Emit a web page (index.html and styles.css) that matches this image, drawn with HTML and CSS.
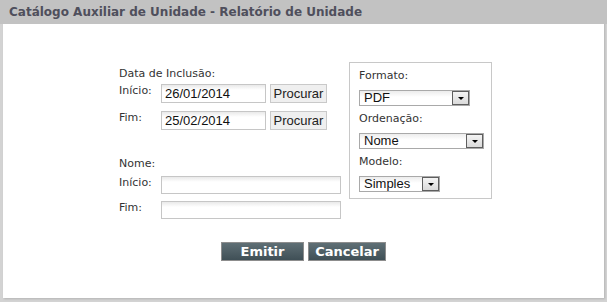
FILE: index.html
```html
<!DOCTYPE html>
<html lang="pt">
<head>
  <meta charset="UTF-8">
  <title>Relatório de Unidade</title>
  <link rel="stylesheet" href="styles.css">
</head>
<body>
  <div class="panel">
    <div class="panel-title">Catálogo Auxiliar de Unidade - Relatório de Unidade</div>

    <div class="panel-body">
      <div class="filters">
        <!-- filtros à esquerda -->
        <div class="filter-column">
          <div class="group-title">Data de Inclusão:</div>
          <div class="field-row">
            <label for="dtInicio">Início:</label>
            <input type="text" id="dtInicio" class="date-input" value="26/01/2014">
            <button class="lookup-button">Procurar</button>
          </div>
          <div class="field-row row-gap">
            <label for="dtFim">Fim:</label>
            <input type="text" id="dtFim" class="date-input" value="25/02/2014">
            <button class="lookup-button">Procurar</button>
          </div>

          <div class="group-title group-name">Nome:</div>
          <div class="field-row">
            <label for="nomeInicio">Início:</label>
            <input type="text" id="nomeInicio" class="name-input">
          </div>
          <div class="field-row row-gap-small">
            <label for="nomeFim">Fim:</label>
            <input type="text" id="nomeFim" class="name-input">
          </div>
        </div>

        <!-- opções do relatório -->
        <div class="options-box">
          <label class="option-label" for="formato">Formato:</label>
          <div class="select-wrap select-format">
            <select id="formato"><option>PDF</option><option>XLS</option></select>
          </div>
          <label class="option-label" for="ordenacao">Ordenação:</label>
          <div class="select-wrap select-order">
            <select id="ordenacao"><option>Nome</option><option>Código</option></select>
          </div>
          <label class="option-label" for="modelo">Modelo:</label>
          <div class="select-wrap select-model">
            <select id="modelo"><option>Simples</option><option>Completo</option></select>
          </div>
        </div>
      </div>

      <div class="actions">
        <button class="action-button btn-emit">Emitir</button>
        <button class="action-button btn-cancel">Cancelar</button>
      </div>
    </div>
  </div>
</body>
</html>
```

FILE: styles.css
```css
html, body {
  margin: 0;
  padding: 0;
  height: 100%;
}

body {
  background-color: #d3d3d3;
  font-family: "DejaVu Sans", Verdana, sans-serif;
  font-size: 11px;
  color: #333;
}

.panel {
  margin: 0 3px 0 3px;
  height: 298px;
  background-color: #fff;
  box-shadow: 1px 1px 2px rgba(0, 0, 0, 0.15);
}

.panel-title {
  margin: 0 -3px;
  height: 24px;
  padding-left: 9px;
  background-color: #c2c2c2;
  color: #4f4f5c;
  font-size: 12px;
  font-weight: bold;
  line-height: 25px;
}

.panel-body {
  padding-top: 38px;
}

.filters {
  display: flex;
  align-items: flex-start;
  padding-left: 116px;
}

.filter-column {
  width: 230px;
  margin-top: 5px;
}

.group-title {
  line-height: 14px;
  height: 14px;
  margin-bottom: 3px;
}

.group-name {
  margin-top: 27px;
  margin-bottom: 5px;
}

.field-row {
  display: flex;
  align-items: flex-start;
}

.field-row label {
  width: 42px;
  line-height: 14px;
}

.row-gap {
  margin-top: 8px;
}

.row-gap-small {
  margin-top: 7px;
}

.date-input,
.name-input {
  box-sizing: border-box;
  margin: 0;
  padding: 0 3px;
  border: 1px solid #c6c6c6;
  background: linear-gradient(#e9e9e9, #fff 5px);
  font-family: "Liberation Sans", Arial, sans-serif;
  font-size: 13px;
  color: #111;
  outline: none;
}

.date-input {
  width: 105px;
  height: 19px;
}

.name-input {
  width: 180px;
  height: 18px;
}

.lookup-button {
  box-sizing: border-box;
  width: 57px;
  height: 19px;
  margin: 0 0 0 4px;
  padding: 0;
  border: 1px solid #c9c9c9;
  background-color: #efefef;
  font-family: "Liberation Sans", Arial, sans-serif;
  font-size: 13px;
  color: #222;
  cursor: pointer;
}

.options-box {
  box-sizing: border-box;
  width: 143px;
  height: 137px;
  padding: 6px 0 0 9px;
  border: 1px solid #c8c8c8;
}

.option-label {
  display: block;
  line-height: 14px;
}

.select-wrap {
  position: relative;
  box-sizing: border-box;
  height: 16px;
  margin: 7px 0 6px;
  border: 1px solid #a9a9a9;
  background: linear-gradient(#ececec, #fff 6px);
}

.select-wrap select {
  display: block;
  width: 100%;
  height: 14px;
  margin: 0;
  padding: 0 0 0 4px;
  border: none;
  background: transparent;
  -webkit-appearance: none;
  appearance: none;
  font-family: "Liberation Sans", Arial, sans-serif;
  font-size: 13px;
  line-height: 14px;
  color: #111;
  outline: none;
}

/* botão da seta */
.select-wrap::before {
  content: "";
  position: absolute;
  top: 0;
  right: 0;
  width: 15px;
  height: 12px;
  border: 1px solid #5e5e5e;
  background: linear-gradient(#f4f4f4, #dadada);
}

.select-wrap::after {
  content: "";
  position: absolute;
  top: 6px;
  right: 5px;
  border-left: 3.5px solid transparent;
  border-right: 3.5px solid transparent;
  border-top: 3.5px solid #000;
}

.select-format {
  width: 111px;
}

.select-order {
  width: 125px;
}

.select-model {
  width: 81px;
}

.actions {
  display: flex;
  justify-content: center;
  gap: 4px;
  margin-top: 23px;
}

.action-button {
  box-sizing: border-box;
  height: 19px;
  margin: 0;
  padding: 0;
  border: 1px solid #8d8d8d;
  background: linear-gradient(#5f6f75, #3f4f56);
  color: #fff;
  font-family: "DejaVu Sans", Verdana, sans-serif;
  font-size: 13px;
  font-weight: bold;
  line-height: 17px;
  cursor: pointer;
}

.btn-emit {
  width: 83px;
}

.btn-cancel {
  width: 78px;
}
```
